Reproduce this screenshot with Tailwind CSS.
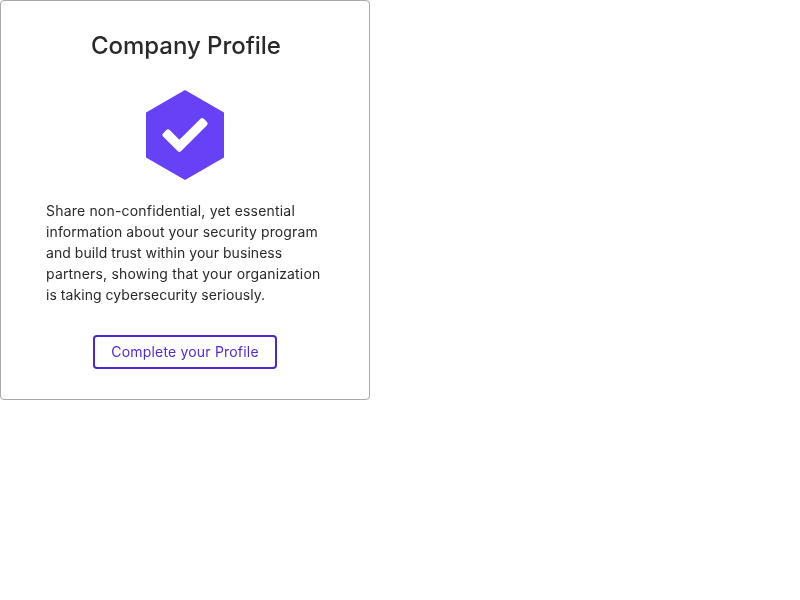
<!DOCTYPE html>
<html lang="en">
<head>
<meta charset="utf-8">
<title>Company Profile</title>
<script src="https://cdn.jsdelivr.net/npm/@tailwindcss/browser@4"></script>
</head>
<body class="bg-white font-['Inter',sans-serif] text-[#292929]">
<div class="w-[370px] h-[400px] border border-[#a8a8a8] rounded flex flex-col items-center pt-[29px]">
  <h1 class="pl-px text-2xl leading-8 font-medium tracking-[-0.04px] will-change-transform">Company Profile</h1>
  <svg class="mt-7 w-[78px] h-[90px]" viewBox="0 0 78 90">
    <path d="M39 0 78 22.5v45L39 90 0 67.5v-45z" fill="#6741f5"/>
    <path d="M17 43.4 20.3 40Q22 38.3 23.7 40L33.4 49.8 54.5 28.7Q56.1 27.2 57.8 28.8L61 32Q62.6 33.6 61 35.2L35 61.2Q33.4 62.7 31.9 61.2L17 46.5Q15.5 45 17 43.4z" fill="#fff"/>
  </svg>
  <p class="mt-5 w-[278px] text-sm leading-[21px] whitespace-nowrap will-change-transform">
    <span class="block tracking-[0.19px]">Share non-confidential, yet essential</span>
    <span class="block tracking-[0.11px]">information about your security program</span>
    <span class="block tracking-[0.05px]">and build trust within your business</span>
    <span class="block tracking-[0.17px]">partners, showing that your organization</span>
    <span class="block tracking-[0.05px]">is taking cybersecurity seriously.</span>
  </p>
  <button class="mt-[30px] h-[34px] w-[184px] rounded border-2 border-[#4b27cf] text-sm text-[#4f2bd3] tracking-[0.19px] whitespace-nowrap will-change-transform">Complete your Profile</button>
</div>
</body>
</html>
